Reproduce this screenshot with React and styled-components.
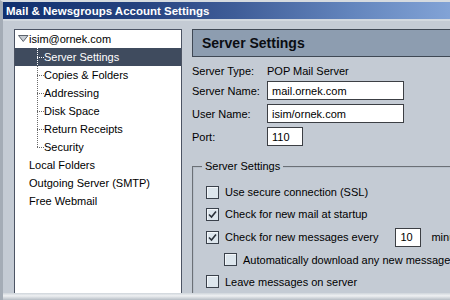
import React from 'react';
import styled, { createGlobalStyle } from 'styled-components';

const GlobalStyle = createGlobalStyle`
  body {
    margin: 0;
    background: #c4cbd4;
    font-family: "Liberation Sans", Arial, sans-serif;
    font-size: 11px;
    color: #000;
  }
`;

const Window = styled.div`
  width: 450px;
  height: 300px;
  overflow: hidden;
  display: flex;
  flex-direction: column;
  background: #c4cbd4;
  border-left: 3px solid #a4acb6;
  border-top: 2px solid #d6dbe0;
  box-sizing: border-box;
`;

const TitleBar = styled.div`
  height: 17px;
  flex-shrink: 0;
  display: flex;
  align-items: center;
  padding-left: 3px;
  background: linear-gradient(to right, #10306f 0%, #25427f 30%, #3f5d98 52%, #6385bd 78%, #82a3d6 100%);
  color: #fff;
  font-weight: bold;
  font-size: 11.5px;
  white-space: nowrap;
`;

const TitleRule = styled.div`
  height: 2px;
  flex-shrink: 0;
  background: #d3d9df;
`;

const Main = styled.div`
  flex: 1;
  display: flex;
  gap: 10px;
  padding: 8px 0 0 11px;
  min-height: 0;
`;

const TreeBox = styled.div`
  width: 168px;
  flex-shrink: 0;
  background: #fff;
  border: 1px solid #4c5464;
  border-bottom: none;
  box-sizing: border-box;
`;

const TreeRow = styled.div`
  height: 18px;
  display: flex;
  align-items: stretch;
  padding-left: ${(p) => p.$indent}px;
  background: ${(p) => (p.$selected ? '#3f4b5e' : 'transparent')};
  color: ${(p) => (p.$selected ? '#fff' : '#000')};
  white-space: nowrap;
`;

const RowLabel = styled.span`
  display: flex;
  align-items: center;
`;

const Connector = styled.span`
  width: 7px;
  flex-shrink: 0;
  background-image:
    repeating-linear-gradient(to bottom, ${(p) => p.$color} 0 1px, transparent 1px 2px),
    repeating-linear-gradient(to right, ${(p) => p.$color} 0 1px, transparent 1px 2px);
  background-size: 1px ${(p) => (p.$last ? '50%' : '100%')}, 100% 1px;
  background-position: 0 0, 0 50%;
  background-repeat: no-repeat;
`;

const Twisty = styled.svg`
  width: 11px;
  align-self: center;
`;

const RightPane = styled.div`
  width: 290px;
  flex-shrink: 0;
`;

const PageHeader = styled.div`
  height: 28px;
  box-sizing: border-box;
  display: flex;
  align-items: center;
  padding-left: 9px;
  background: #8d9db0;
  border: 1px solid #3f4854;
  border-right: none;
  font-size: 14px;
  font-weight: bold;
  color: #0b0d12;
`;

const FormGrid = styled.div`
  display: grid;
  grid-template-columns: 75px auto;
  align-items: center;
  row-gap: 4px;
  margin-top: 6px;
`;

const StaticValue = styled.span`
  line-height: 16px;
  margin-bottom: -2px;
`;

const TextBox = styled.div`
  width: ${(p) => p.$w}px;
  height: 19px;
  box-sizing: border-box;
  border: 1px solid #3c3f44;
  background: #fff;
  display: flex;
  align-items: center;
  padding-left: 4px;
  font-size: 11px;
`;

const GroupBox = styled.fieldset`
  margin: 14px 0 0 0;
  padding: 0 0 0 8px;
  border: 2px groove #b8c0ca;
  border-right: none;
  border-bottom: none;
  min-width: 0;
`;

const Legend = styled.legend`
  padding: 0 3px;
  line-height: 13px;
`;

const CheckList = styled.div`
  padding-top: 8px;
  display: flex;
  flex-direction: column;
`;

const CheckRow = styled.div`
  height: ${(p) => p.$h}px;
  flex-shrink: 0;
  display: flex;
  align-items: center;
  padding-left: ${(p) => p.$indent}px;
  white-space: nowrap;
`;

const Box = styled.span`
  width: 13px;
  height: 13px;
  box-sizing: border-box;
  border: 1px solid #3a414b;
  background: #dde6ed;
  box-shadow: inset 1px 1px 0 #f3f6f9;
  margin-right: 6px;
  display: flex;
  align-items: center;
  justify-content: center;
  flex-shrink: 0;
`;

const SmallBox = styled(TextBox)`
  margin: 0 10px 0 17px;
  flex-shrink: 0;
`;

const Footer = styled.div`
  height: 7px;
  flex-shrink: 0;
  background: linear-gradient(to bottom, #cfd5db, #eef0f2 40%, #b6bdc5);
`;

const tree = [
  { label: 'Server Settings', selected: true },
  { label: 'Copies & Folders' },
  { label: 'Addressing' },
  { label: 'Disk Space' },
  { label: 'Return Receipts' },
  { label: 'Security', last: true },
];

const topLevel = ['Local Folders', 'Outgoing Server (SMTP)', 'Free Webmail'];

const Check = ({ checked }) => (
  <Box>
    {checked && (
      <svg width="9" height="9" viewBox="0 0 9 9">
        <path d="M1 4.5 L3.5 7 L8 1.5" fill="none" stroke="#2b313a" strokeWidth="1.6" />
      </svg>
    )}
  </Box>
);

export default function App() {
  return (
    <>
      <GlobalStyle />
      <Window>
        <TitleBar>Mail &amp; Newsgroups Account Settings</TitleBar>
        <TitleRule />
        <Main>
          <TreeBox>
            <TreeRow $indent={3}>
              <Twisty viewBox="0 0 11 8">
                <path d="M0.5 0.5 H10 L5.25 6.5 Z" fill="#c7ccd2" stroke="#5b626c" />
              </Twisty>
              <RowLabel>isim@ornek.com</RowLabel>
            </TreeRow>
            {tree.map((item) => (
              <TreeRow key={item.label} $indent={22} $selected={item.selected}>
                <Connector $color={item.selected ? '#fff' : '#6a6a6a'} $last={item.last} />
                <RowLabel>{item.label}</RowLabel>
              </TreeRow>
            ))}
            {topLevel.map((label) => (
              <TreeRow key={label} $indent={14}>
                <RowLabel>{label}</RowLabel>
              </TreeRow>
            ))}
          </TreeBox>

          <RightPane>
            <PageHeader>Server Settings</PageHeader>
            <FormGrid>
              <StaticValue>Server Type:</StaticValue>
              <StaticValue>POP Mail Server</StaticValue>
              <span>Server Name:</span>
              <TextBox $w={137}>mail.ornek.com</TextBox>
              <span>User Name:</span>
              <TextBox $w={137}>isim/ornek.com</TextBox>
              <span>Port:</span>
              <TextBox $w={36}>110</TextBox>
            </FormGrid>

            <GroupBox>
              <Legend>Server Settings</Legend>
              <CheckList>
                <CheckRow $h={22} $indent={4}>
                  <Check />
                  Use secure connection (SSL)
                </CheckRow>
                <CheckRow $h={22} $indent={4}>
                  <Check checked />
                  Check for new mail at startup
                </CheckRow>
                <CheckRow $h={24} $indent={4}>
                  <Check checked />
                  Check for new messages every
                  <SmallBox $w={26}>10</SmallBox>
                  minutes
                </CheckRow>
                <CheckRow $h={21} $indent={22}>
                  <Check />
                  Automatically download any new messages
                </CheckRow>
                <CheckRow $h={23} $indent={4}>
                  <Check />
                  Leave messages on server
                </CheckRow>
                <CheckRow $h={23} $indent={22}>
                  <Check />
                  At most
                </CheckRow>
              </CheckList>
            </GroupBox>
          </RightPane>
        </Main>
        <Footer />
      </Window>
    </>
  );
}
